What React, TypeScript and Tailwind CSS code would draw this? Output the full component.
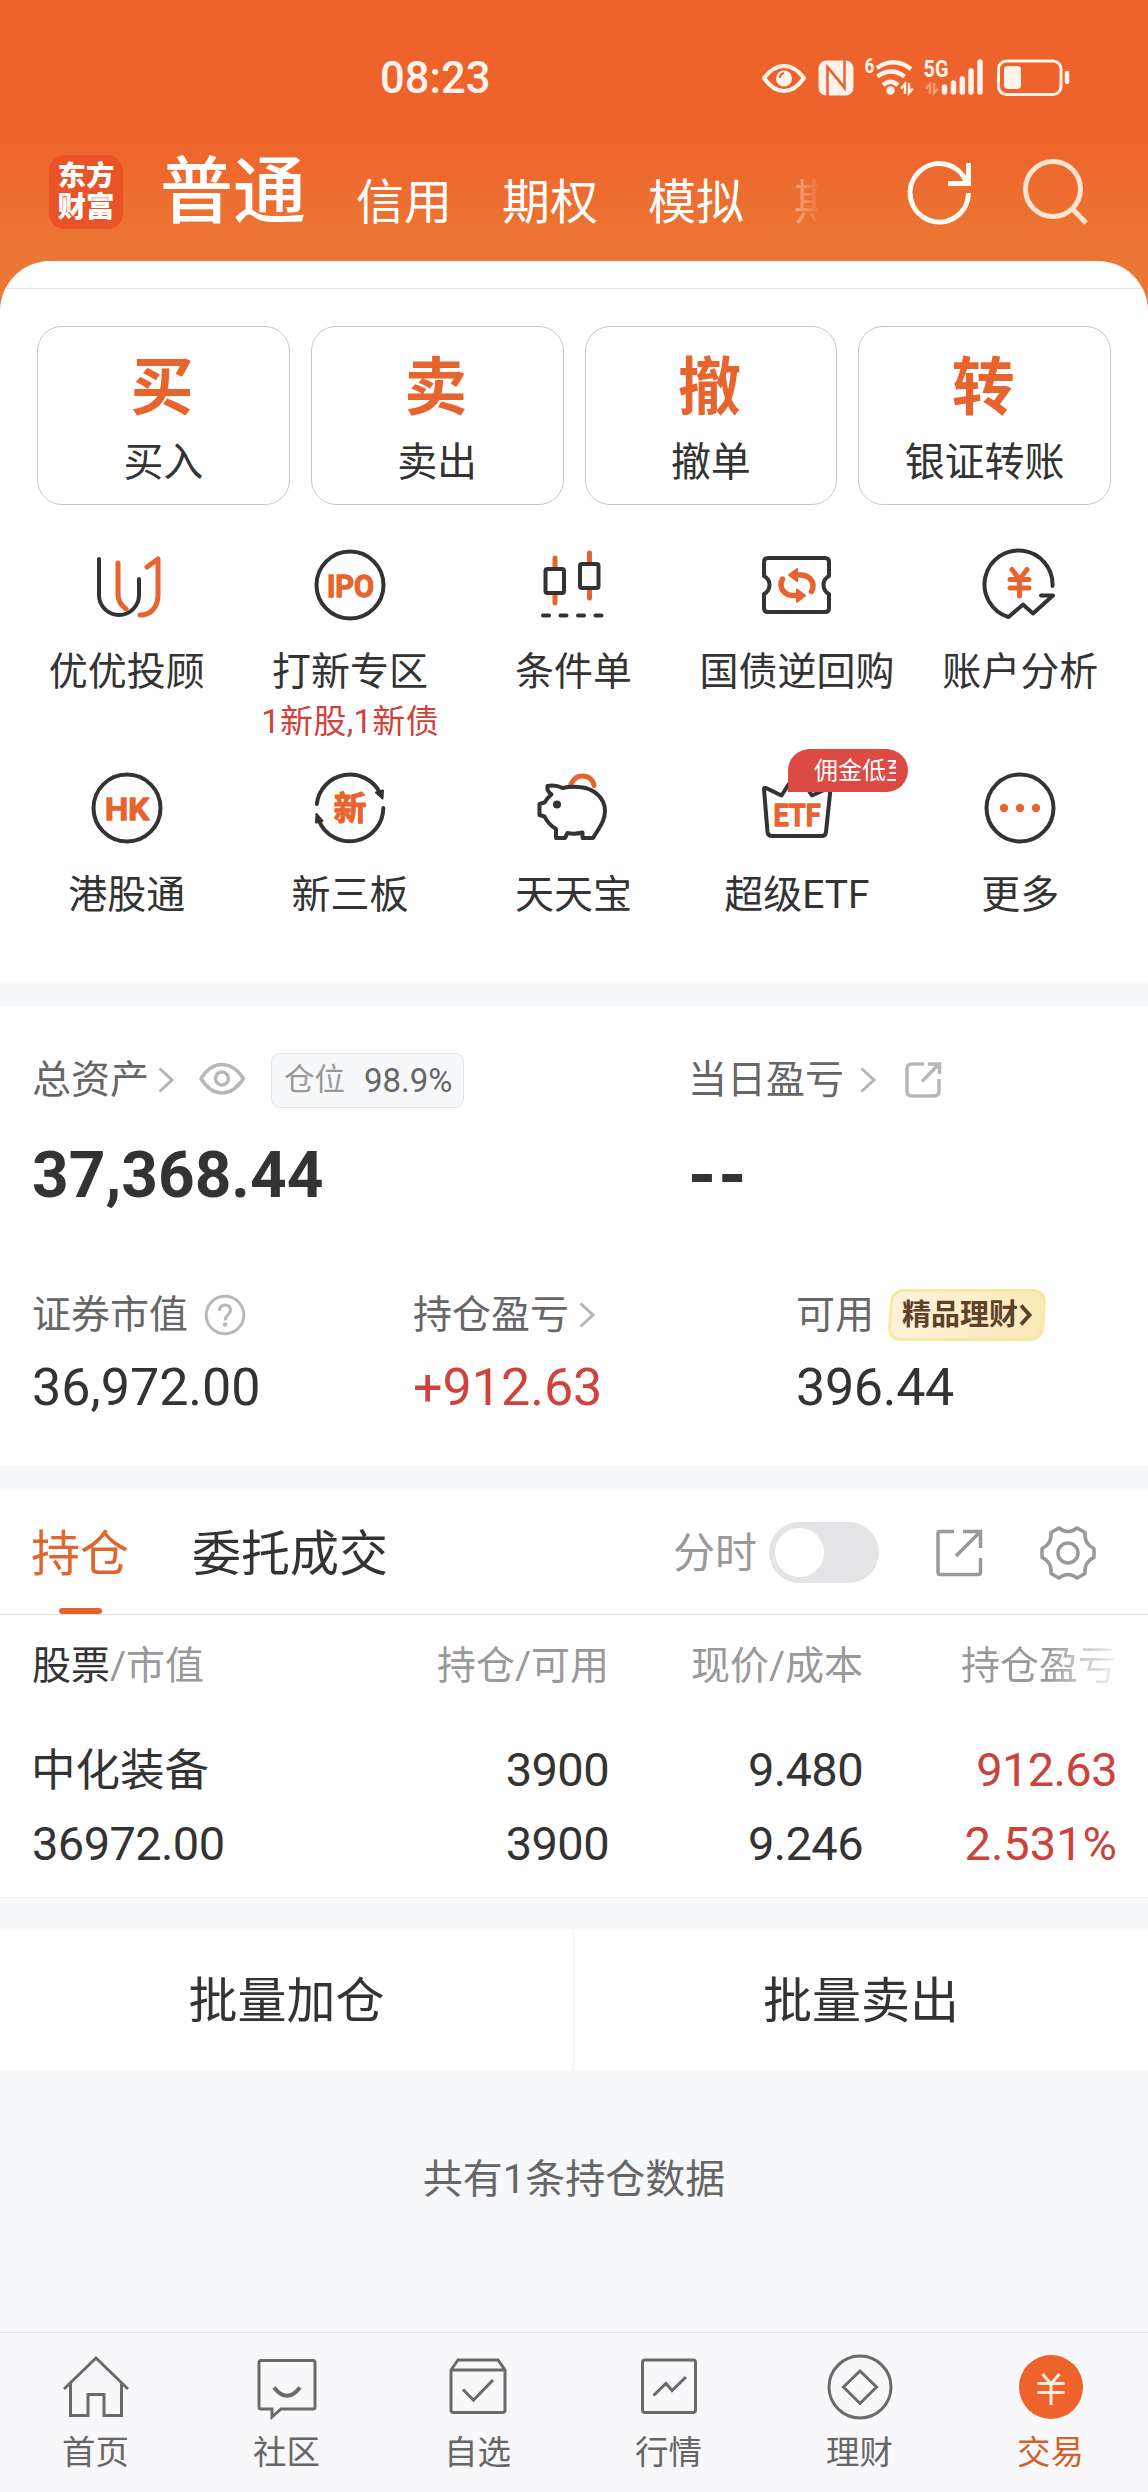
import React from "react";

const ORANGE = "#e8642f";
const DARK = "#333333";

type IconProps = { children: React.ReactNode };

// 72px canvas shared by all the shortcut icons
const ShortcutIcon: React.FC<IconProps> = ({ children }) => (
  <svg
    className="w-[72px] h-[72px] overflow-visible"
    viewBox="0 0 72 72"
    fill="none"
    stroke={DARK}
    strokeWidth="4"
    strokeLinecap="round"
    strokeLinejoin="round"
  >
    {children}
  </svg>
);

const IconText: React.FC<{ x: number; y?: number; w: number; children: string }> = ({ x, y = 47.5, w, children }) => (
  <text
    x={x}
    y={y}
    textLength={w}
    lengthAdjust="spacingAndGlyphs"
    fontSize="31.5"
    fontWeight="600"
    fill={ORANGE}
    stroke={ORANGE}
    strokeWidth="1.5"
  >
    {children}
  </text>
);

const YouIcon = () => (
  <ShortcutIcon>
    <path d="M8 10V46a20 20 0 0 0 40 0V30" />
    <g stroke={ORANGE} strokeWidth="5">
      <path d="M27 14V46q0 8 8 14" />
      <path d="M56 18l11-8V46c0 12-7 20-18 20" />
    </g>
  </ShortcutIcon>
);

const IpoIcon = () => (
  <ShortcutIcon>
    <circle cx="36" cy="36" r="33.5" />
    <IconText x={13} w={47}>IPO</IconText>
  </ShortcutIcon>
);

const CandleIcon = () => (
  <ShortcutIcon>
    <g stroke={ORANGE} strokeWidth="5">
      <path d="M18 9v10M18 46v8M52.5 4v10M52.5 41v8" />
    </g>
    <rect x="8.5" y="20" width="18.5" height="24" rx="2" fill="#fff" />
    <rect x="43" y="15" width="18.5" height="24" rx="2" fill="#fff" />
    <path d="M6 66.5h6M23.5 66.5h6M41 66.5h6M58.5 66.5h6" />
  </ShortcutIcon>
);

const BondIcon = () => (
  <ShortcutIcon>
    <path d="M7 9H64q4 0 4 4V27q-5.5 3-5.5 9q0 6 5.5 9V59q0 4-4 4H7q-4 0-4-4V45q5.5-3 5.5-9q0-6-5.5-9V13q0-4 4-4z" />
    <g stroke={ORANGE} strokeWidth="5.5">
      <path d="M36 26h4c7 0 12 5 12 11 0 2-.5 4-1.5 5.5" />
      <path d="M36 20v12l-8-6z" fill={ORANGE} strokeWidth="2" />
      <g transform="rotate(180 36 36.3)">
        <path d="M36 26h4c7 0 12 5 12 11 0 2-.5 4-1.5 5.5" />
        <path d="M36 20v12l-8-6z" fill={ORANGE} strokeWidth="2" />
      </g>
    </g>
  </ShortcutIcon>
);

const AnalysisIcon = () => (
  <ShortcutIcon>
    <path d="M68.5 37A34 34 0 1 0 24.5 68L39 55.5l10 9L69 46.5H57" />
    <path d="M28 20.500l7.500 10 7.500-10M35.500 30.500V47M26 30.500h19M26 39h19" stroke={ORANGE} strokeWidth="5" />
  </ShortcutIcon>
);

const HkIcon = () => (
  <ShortcutIcon>
    <circle cx="36" cy="36" r="33.5" />
    <IconText x={14} w={44}>HK</IconText>
  </ShortcutIcon>
);

const XinIcon = () => (
  <ShortcutIcon>
    <path d="M2.8 32A33.500 33.500 0 0 1 66 21M69.300 36A33.500 33.500 0 0 1 5 49" />
    <path d="M62 20.500l7-2-.5 8zM2 50.500l6.500-1.500-6-7z" fill={DARK} strokeWidth="2" />
    <text x="36" y="48" textAnchor="middle" fontSize="33" fontWeight="700" fill={ORANGE} stroke={ORANGE} strokeWidth="1">
      新
    </text>
  </ShortcutIcon>
);

const PigIcon = () => (
  <ShortcutIcon>
    <path d="M34 12C37 6 41 4 45 4c7 0 11 4 12 9.500" stroke={ORANGE} strokeWidth="5" />
    <path
      d="M10.500 14q8-1.500 15 2Q34 14 42 15C57 16 68 26 68 39c0 10-6 17-12 27H45.500v-5.500q-8 2-15 .5L28 66H19V57Q11 52 7.500 44.500L2.500 43V32l5-1.500Q10 26 14.500 22.500 9.500 19 10.500 14z"
      fill="#fff"
    />
    <circle cx="20" cy="32.500" r="4" fill={DARK} stroke="none" />
  </ShortcutIcon>
);

const EtfIcon = () => (
  <ShortcutIcon>
    <path d="M3 17q0-2 2-1l15.500 7.500L33 4q2.500-3 5 0L51 23.500 67.500 16q2-1 2 1L65 60q-.5 4-4 4H11q-4 0-4.500-4z" />
    <IconText x={12.5} y={53.5} w={47}>ETF</IconText>
  </ShortcutIcon>
);

const MoreIcon = () => (
  <ShortcutIcon>
    <circle cx="36" cy="36" r="33.5" />
    <g fill={ORANGE} stroke="none">
      <circle cx="20" cy="36" r="4.2" />
      <circle cx="36" cy="36" r="4.2" />
      <circle cx="52" cy="36" r="4.2" />
    </g>
  </ShortcutIcon>
);

const Chevron: React.FC<{ className?: string }> = ({ className }) => (
  <svg className={`w-[16px] h-[26px] ${className ?? ""}`} viewBox="0 0 16 26" fill="none" stroke="#b5b5b5" strokeWidth="3">
    <path d="M1.5 1.5L14 13 1.5 24.5" />
  </svg>
);

const StatusBar = () => (
  <div className="flex h-[154px] items-center pl-[380px] text-[43.5px] font-medium leading-none text-[#fff3ec]">
    <span className="w-[380px] pt-[3px]">08:23</span>
    <svg className="w-[310px] h-[40px] overflow-visible" viewBox="760 57 310 40" fill="none" stroke="#fff3ec">
      <path d="M764 78Q773 66 784 66T804 78Q795 91 784 91T764 78z" strokeWidth="4" strokeLinejoin="round" />
      <circle cx="784" cy="78.5" r="8" fill="#fff3ec" stroke="none" />
      <path d="M780 78q0-4 4-5" stroke="#ee622b" strokeWidth="2" />
      <rect x="818.5" y="60.5" width="35" height="35" rx="8" fill="#fff3ec" stroke="none" />
      <path d="M827.5 96V67l15 18M844.5 60v28L829 69" stroke="#ee622b" strokeWidth="2.5" />
      <g strokeWidth="4.5">
        <path d="M877 68Q894 56 911 69" />
        <path d="M877.5 76.5Q891 66.5 904.5 76.5" />
        <path d="M883 85Q890.5 78.5 898 85" />
      </g>
      <circle cx="890.5" cy="90.5" r="4.2" fill="#fff3ec" stroke="none" />
      <path d="M905 94V84l-4 4.500M909 83v10l4-4.500" strokeWidth="2.5" />
      <path d="M930 94V84l-4 4.500M934 83v10l4-4.500" strokeWidth="2.5" opacity=".4" />
      <path
        d="M944.5 87v5M953.5 83v9M962.3 79v13M971 71v21M980 62v30"
        strokeWidth="5.5"
        strokeLinecap="round"
      />
      <rect x="998.5" y="61" width="62.5" height="33.5" rx="8" strokeWidth="3" />
      <rect x="1004" y="66" width="17" height="23" rx="4" fill="#fff3ec" stroke="none" />
      <path d="M1067 73v9" strokeWidth="4.5" strokeLinecap="round" />
      <g fill="#fff3ec" stroke="none" fontWeight="700">
        <text x="864.5" y="73" fontSize="20" textLength="10" lengthAdjust="spacingAndGlyphs">6</text>
        <text x="923.5" y="76.5" fontSize="23.5" textLength="25" lengthAdjust="spacingAndGlyphs">5G</text>
      </g>
    </svg>
  </div>
);

const TopNav = () => (
  <div className="flex h-[107px] items-start text-white">
    <div className="ml-[49px] mt-px flex h-[74px] w-[74px] shrink-0 flex-col items-center justify-center rounded-[15px] bg-[#ea5228] text-[28.5px] font-black leading-[31px]">
      <span>东方</span>
      <span>财富</span>
    </div>
    <span className="ml-[37px] w-[146px] shrink-0 text-[73px] font-medium leading-[76px]">普通</span>
    <ul className="ml-[50px] mt-[14px] flex w-[462px] shrink-0 gap-[50px] overflow-hidden whitespace-nowrap text-[48px] leading-[70px]">
      <li>信用</li>
      <li>期权</li>
      <li>模拟</li>
      <li className="bg-gradient-to-r from-white/40 to-white/0 to-[28px] bg-clip-text text-transparent">期</li>
    </ul>
    <svg className="ml-[87px] mt-1 w-[70px] h-[70px] shrink-0" viewBox="0 0 70 70" fill="none" stroke="#fffaf4" strokeWidth="5">
      <path d="M63.5 35A29.2 29.2 0 1 1 61 23" />
      <path d="M63.5 5v20.500H43" />
    </svg>
    <svg className="ml-[45px] mt-px w-[70px] h-[72px] shrink-0" viewBox="0 0 70 72" fill="none" stroke="#fde3d1" strokeWidth="5">
      <circle cx="33" cy="34" r="27.5" />
      <path d="M52 53.500L66 68" />
    </svg>
  </div>
);

const actions = [
  { glyph: "买", label: "买入" },
  { glyph: "卖", label: "卖出" },
  { glyph: "撤", label: "撤单" },
  { glyph: "转", label: "银证转账" },
];

const shortcuts = [
  { icon: <YouIcon />, label: "优优投顾" },
  { icon: <IpoIcon />, label: "打新专区", note: "1新股,1新债" },
  { icon: <CandleIcon />, label: "条件单" },
  { icon: <BondIcon />, label: "国债逆回购" },
  { icon: <AnalysisIcon />, label: "账户分析" },
  { icon: <HkIcon />, label: "港股通" },
  { icon: <XinIcon />, label: "新三板" },
  { icon: <PigIcon />, label: "天天宝" },
  { icon: <EtfIcon />, label: "超级ETF", badge: "佣金低至" },
  { icon: <MoreIcon />, label: "更多" },
];

const Shortcuts = () => (
  <div className="bg-[#ec7734]">
    <section className="h-[720px] overflow-hidden rounded-t-[50px] bg-white">
      <div className="h-[28px] border-b border-[#e6e6e6]" />
      <div className="grid grid-cols-4 gap-[21px] px-[37px] pt-[37px]">
        {actions.map((a) => (
          <div key={a.label} className="flex h-[179px] flex-col items-center rounded-[25px] border border-[#c6c6c6]">
            <span className="mr-[3px] mt-[29px] h-[64px] text-[63px] font-bold leading-[64px] text-[#e8642f]">{a.glyph}</span>
            <span className="mt-[22px] text-[40px] leading-[42px]">{a.label}</span>
          </div>
        ))}
      </div>
      <div className="mt-[44px] grid grid-cols-5 grid-rows-[223px_209px] pl-[15px] pr-[16px]">
        {shortcuts.map((s) => (
          <div key={s.label} className="flex flex-col items-center whitespace-nowrap">
            <div className="relative h-[72px]">
              {s.icon}
              {s.badge && (
                <div className="absolute left-[27px] top-[-23px] flex h-[43px] w-[120px] items-center rounded-[22px] rounded-bl-none bg-[#db4a44] pl-[26px]">
                  <span className="w-[82px] overflow-hidden text-[24px] leading-[34px] text-white">{s.badge}</span>
                </div>
              )}
            </div>
            <span className="mt-[31px] text-[39px] leading-[40px]">{s.label}</span>
            {s.note && <span className="mt-[13px] text-[33px] leading-[34px] tracking-[0.3px] text-[#cf423b]">{s.note}</span>}
          </div>
        ))}
      </div>
    </section>
  </div>
);

const Assets = () => (
  <section className="h-[460px] bg-white pl-8 pt-[46px] text-[39px] leading-none text-[#666]">
    <div className="flex h-[56px] items-center">
      <div className="flex w-[656px] items-center">
        <span>总资产</span>
        <Chevron className="ml-[9px]" />
        <svg className="ml-[24px] w-[48px] h-[36px]" viewBox="0 0 48 36" fill="none" stroke="#b8b8b8" strokeWidth="3.5">
          <path d="M3 16.500Q12 2.500 24 2.500T45.500 16.500Q36 31 24 31T3 16.500z" strokeLinejoin="round" />
          <circle cx="24" cy="16.5" r="6.5" />
        </svg>
        <div className="ml-[25px] flex h-[55px] w-[193px] items-center rounded-[9px] border border-[#e2e3e5] bg-[#f7f8fa] pl-[12px]">
          <span className="text-[30.5px] text-[#999]">仓位</span>
          <span className="ml-[19px] text-[33px]">98.9%</span>
        </div>
      </div>
      <span>当日盈亏</span>
      <Chevron className="ml-[16px]" />
      <svg className="ml-[28px] w-[38px] h-[38px]" viewBox="0 0 38 38" fill="none" stroke="#b8b8b8" strokeWidth="3.5">
        <path d="M20 3H8Q3 3 3 8V30q0 5 5 5H30q5 0 5-5V18" />
        <path d="M24 3H35.500V13M35 3L18 20.500" />
      </svg>
    </div>
    <div className="mt-[34px] flex h-[64px] items-center pt-[3px] text-[64px] font-bold text-[#333]">
      <span className="w-[656px]">37,368.44</span>
      <span className="text-[72px] tracking-[2px]">--</span>
    </div>
    <div className="mt-[83px] flex h-[52px] items-center">
      <div className="flex w-[381px] items-center">
        <span>证券市值</span>
        <svg className="ml-[16px] w-[42px] h-[42px]" viewBox="0 0 42 42" fill="none" stroke="#b8b8b8" strokeWidth="3">
          <circle cx="21" cy="21" r="18.8" />
          <path d="M15.500 17q0-6 5.500-6t5.500 5.500c0 4-5.500 4.500-5.500 10" />
          <circle cx="21" cy="30.5" r="2.2" fill="#b8b8b8" stroke="none" />
        </svg>
      </div>
      <div className="flex w-[383px] items-center">
        <span>持仓盈亏</span>
        <Chevron className="ml-[10px]" />
      </div>
      <span>可用</span>
      <div className="relative ml-[15px] flex h-[52px] w-[156px] items-center">
        <div className="absolute inset-0 -skew-x-[4deg] rounded-[13px] border-[3px] border-[#f8e8a0] bg-gradient-to-r from-[#fdf3dc] to-[#fae9b8]" />
        <span className="relative ml-[13px] text-[29px] font-bold text-[#5f4128]">精品理财</span>
        <svg className="relative ml-px w-[14px] h-[24px]" viewBox="0 0 14 24" fill="none" stroke="#5f4128" strokeWidth="4">
          <path d="M2 2.500L10.500 12 2 21.500" />
        </svg>
      </div>
    </div>
    <div className="mt-[21px] flex h-[52px] items-center text-[52px] text-[#333]">
      <span className="w-[381px]">36,972.00</span>
      <span className="w-[383px] text-[#d0423b]">+912.63</span>
      <span className="tracking-[-0.3px]">396.44</span>
    </div>
  </section>
);

const Holdings = () => (
  <section className="h-[406px] bg-white leading-none">
    <div className="flex h-[124px] items-center border-b border-[#dedede] pl-[31px]">
      <div className="relative flex h-full items-center pt-[3px] text-[49px] text-[#e0662f]">
        持仓
        <div className="absolute bottom-0 left-[28px] h-[6px] w-[43px] rounded-full bg-[#e8642f]" />
      </div>
      <span className="ml-[63px] pt-[3px] text-[49px]">委托成交</span>
      <span className="ml-[285px] pt-[2px] text-[42px] text-[#999]">分时</span>
      <div className="ml-[12px] flex h-[61px] w-[110px] items-center rounded-full bg-[#e4e4e6] pl-[6px]">
        <div className="h-[49px] w-[49px] rounded-full bg-white" />
      </div>
      <svg className="ml-[54px] w-[52px] h-[52px]" viewBox="0 0 52 52" fill="none" stroke="#999" strokeWidth="3.5">
        <path d="M21 4.500H7q-2 0-2 2V45q0 2.500 2 2.500H45q2.500 0 2.500-2.500V31" />
        <path d="M30 4.500H47.500V21M47 5L23 29" />
      </svg>
      <svg className="ml-[54px] w-[58px] h-[58px]" viewBox="0 0 58 58" fill="none" stroke="#999" strokeWidth="3.5" strokeLinejoin="round">
        <path d="M20 4Q29 11 38 4L46 8.500Q45 20 55 24.500V33.500Q45 38 46 49.500L38 54Q29 47 20 54L12 49.500Q13 38 3 33.500V24.500Q13 20 12 8.500z" />
        <circle cx="29" cy="29" r="10" />
      </svg>
    </div>
    <div className="grid grid-cols-[277px_300px_254px_254px] pl-8 pt-[31px] text-[39px] leading-[40px] text-[#999]">
      <span>
        <span className="text-[#333]">股票</span>/市值
      </span>
      <span className="text-right">持仓/可用</span>
      <span className="text-right">现价/成本</span>
      <span className="text-right">
        <span className="bg-gradient-to-r from-[#999] from-55% to-[#999]/10 bg-clip-text text-transparent">持仓盈亏</span>
      </span>
    </div>
    <div className="mt-[60px] grid grid-cols-[277px_300px_254px_254px] gap-y-[25px] pl-8 text-right text-[47px] leading-[48px] tracking-[-0.6px]">
      <span className="-ml-px pt-px text-left text-[44.5px] tracking-normal">中化装备</span>
      <span>3900</span>
      <span>9.480</span>
      <span className="text-[#cb423b]">912.63</span>
      <span className="text-left">36972.00</span>
      <span>3900</span>
      <span>9.246</span>
      <span className="tracking-normal text-[#cb423b]">2.531%</span>
    </div>
  </section>
);

const tabs = [
  {
    label: "首页",
    icon: <path d="M2 36L34 5 66 36M8.500 30V62.500H26V41.500H42V62.500H59.500V30" />,
  },
  {
    label: "社区",
    icon: (
      <>
        <path d="M8 7.500H60q2 0 2 2V54q0 2-2 2H28l-9 8V56H8q-2 0-2-2V9.500q0-2 2-2z" />
        <path d="M21 34.500Q34 51 47 34.500" strokeWidth="4" />
      </>
    ),
  },
  {
    label: "自选",
    icon: (
      <>
        <path d="M7 17L14 7H54l7 10V57q0 2.500-2.500 2.500H9.500Q7 59.500 7 57zM7 17H61" />
        <path d="M19 36.500L29.500 47 49 27" />
      </>
    ),
  },
  {
    label: "行情",
    icon: (
      <>
        <rect x="7.5" y="7" width="53" height="52.5" rx="2.5" />
        <path d="M18.500 42.500L31 30.500 37 37.500 51 24" />
      </>
    ),
  },
  {
    label: "理财",
    icon: (
      <>
        <circle cx="34" cy="34" r="31" />
        <path d="M34 18L50.500 34 34 50.500 17.500 34z" />
      </>
    ),
  },
  {
    label: "交易",
    active: true,
    icon: (
      <>
        <circle cx="34" cy="34" r="32" fill="#ed632b" stroke="none" />
        <path d="M25.500 21L34 31l8.500-10M34 31V52M20.500 30.500h27M20.500 39.500h27" stroke="#fdeee2" />
      </>
    ),
  },
];

const TabBar = () => (
  <nav className="flex h-[160px] border-t border-[#e2e2e4] bg-[#f8f8fa] pr-[2px] text-[33.5px] leading-[34px] text-[#666]">
    {tabs.map((t) => (
      <div key={t.label} className="flex flex-1 flex-col items-center pt-[20px]">
        <svg className="w-[68px] h-[68px]" viewBox="0 0 68 68" fill="none" stroke="#6a6a6a" strokeWidth="3">
          {t.icon}
        </svg>
        <span className={t.active ? "mt-[15px] text-[#cf6430]" : "mt-[15px]"}>{t.label}</span>
      </div>
    ))}
  </nav>
);

const App: React.FC = () => {
  return (
    <div className="h-[2492px] w-[1148px] overflow-hidden bg-[#f7f8fa] font-[Roboto,'Noto_Sans_CJK_SC',sans-serif] text-[#333]">
      <header className="h-[261px] bg-gradient-to-b from-[#ee622b] from-50% to-[#ec7734] to-[96%]">
        <StatusBar />
        <TopNav />
      </header>
      <Shortcuts />
      <div className="h-[25px]" />
      <Assets />
      <div className="h-[25px]" />
      <Holdings />
      <div className="h-[32px] border-t border-[#eeeef0]" />
      <div className="grid h-[141px] grid-cols-2 items-stretch bg-white text-[49px] leading-none">
        <div className="flex items-center justify-center border-r border-[#f4f4f6] pt-[3px]">批量加仓</div>
        <div className="flex items-center justify-center pt-[3px]">批量卖出</div>
      </div>
      <div className="h-[262px] pt-[90px] text-center text-[40px] leading-[40px] text-[#666]">共有1条持仓数据</div>
      <TabBar />
    </div>
  );
};

export default App;
